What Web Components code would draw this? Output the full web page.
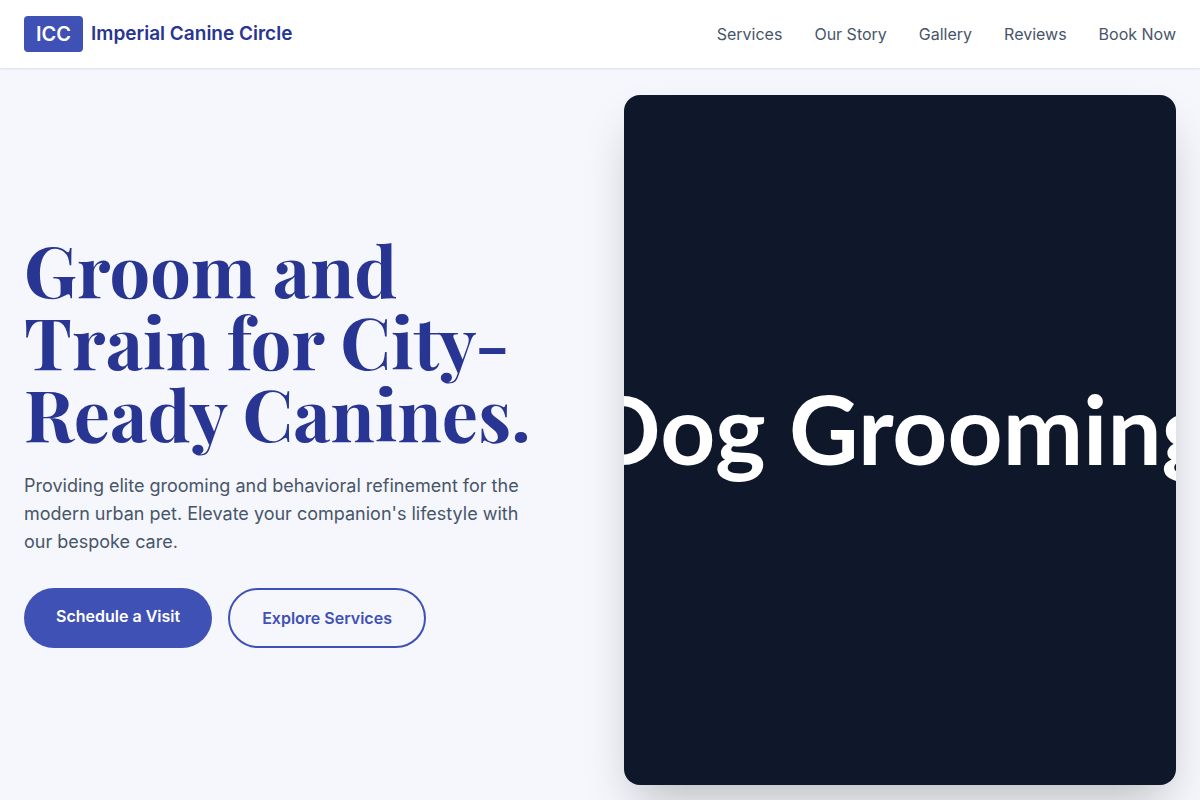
<!DOCTYPE html>
<html lang="en">
<head>
<meta charset="utf-8">
<meta name="viewport" content="width=device-width, initial-scale=1">
<title>Imperial Canine Circle</title>
<style>
  :root {
    --indigo: #3f51b5;
    --indigo-dark: #283593;
    --slate: #475569;
    --page: #f5f7fc;
  }
  body {
    margin: 0;
    background: var(--page);
    color: var(--slate);
    font: 16px/24px Inter, "Liberation Sans", sans-serif;
  }
</style>
</head>
<body>
<icc-header>
  <icc-brand slot="brand" mark="ICC">Imperial Canine Circle</icc-brand>
  <icc-nav-link href="#services">Services</icc-nav-link>
  <icc-nav-link href="#story">Our Story</icc-nav-link>
  <icc-nav-link href="#gallery">Gallery</icc-nav-link>
  <icc-nav-link href="#reviews">Reviews</icc-nav-link>
  <icc-nav-link href="#book">Book Now</icc-nav-link>
</icc-header>
<icc-hero>
  <span slot="title">Groom and Train for City-Ready Canines.</span>
  <span slot="lead">Providing elite grooming and behavioral refinement for the modern urban pet. Elevate your companion's lifestyle with our bespoke care.</span>
  <icc-action slot="actions" href="#book">Schedule a Visit</icc-action>
  <icc-action slot="actions" href="#services" variant="outline">Explore Services</icc-action>
  <icc-poster slot="media">Dog Grooming</icc-poster>
</icc-hero>

<script>
  class Base extends HTMLElement {
    connectedCallback() {
      if (this.shadowRoot) return;
      this.attachShadow({ mode: "open" }).innerHTML = this.template();
    }
  }

  customElements.define("icc-header", class extends Base {
    template() {
      return `<style>
        :host { display: block; position: sticky; top: 0; z-index: 10; }
        header {
          display: flex; align-items: center; justify-content: space-between;
          padding: 16px 24px; background: #fff;
          box-shadow: 0 1px 2px rgba(40, 53, 147, .12);
        }
        nav { display: flex; gap: 32px; }
      </style>
      <header><slot name="brand"></slot><nav aria-label="Main"><slot></slot></nav></header>`;
    }
  });

  customElements.define("icc-brand", class extends Base {
    template() {
      return `<style>
        :host { display: block; }
        a {
          display: flex; align-items: center; gap: 8px;
          color: var(--indigo-dark); text-decoration: none;
          font-size: 19px; line-height: 28px; font-weight: 600;
        }
        .mark { padding: 4px 12px; border-radius: 4px; background: var(--indigo); color: #fff; font-size: 20px; }
      </style>
      <a href="#"><span class="mark">${this.getAttribute("mark")}</span><span><slot></slot></span></a>`;
    }
  });

  customElements.define("icc-nav-link", class extends Base {
    template() {
      return `<style>
        :host { display: block; }
        a { color: var(--slate); text-decoration: none; }
        a:hover { color: var(--indigo); }
      </style>
      <a href="${this.getAttribute("href")}"><slot></slot></a>`;
    }
  });

  customElements.define("icc-hero", class extends Base {
    template() {
      return `<style>
        :host { display: block; }
        section {
          box-sizing: border-box; min-height: calc(100vh - 68px);
          display: grid; grid-template-columns: 1fr 1fr; gap: 48px; align-items: center;
          padding: 12px 24px 0; overflow: hidden;
        }
        h1 {
          margin: 0 0 24px; color: var(--indigo-dark);
          font: 700 72px/72px "Playfair Display", "Liberation Serif", serif;
        }
        p { margin: 0 0 32px; max-width: 512px; font-size: 18px; line-height: 28px; }
        .actions { display: flex; flex-wrap: wrap; gap: 16px; }
        @media (max-width: 800px) { section { grid-template-columns: 1fr; padding-bottom: 24px; } }
      </style>
      <section>
        <div>
          <h1><slot name="title"></slot></h1>
          <p><slot name="lead"></slot></p>
          <div class="actions"><slot name="actions"></slot></div>
        </div>
        <slot name="media"></slot>
      </section>`;
    }
  });

  customElements.define("icc-action", class extends Base {
    template() {
      return `<style>
        :host { display: flex; }
        a {
          padding: 16px 32px; border-radius: 32px;
          background: var(--indigo); color: #fff;
          font-weight: 600; text-decoration: none;
        }
        :host([variant="outline"]) a {
          border: 2px solid var(--indigo); background: none; color: var(--indigo);
        }
      </style>
      <a href="${this.getAttribute("href")}"><slot></slot></a>`;
    }
  });

  customElements.define("icc-poster", class extends Base {
    template() {
      return `<style>
        :host {
          display: flex; align-items: center; justify-content: center;
          box-sizing: border-box; padding-bottom: 24px;
          aspect-ratio: 4 / 5; min-width: 0; overflow: hidden;
          border-radius: 16px; background: #0f172a; color: #fff;
          box-shadow: 0 25px 50px -12px rgba(0, 0, 0, .25);
          font: 700 96px/120px Lato, sans-serif; white-space: nowrap;
        }
      </style>
      <span><slot></slot></span>`;
    }
  });
</script>
</body>
</html>
